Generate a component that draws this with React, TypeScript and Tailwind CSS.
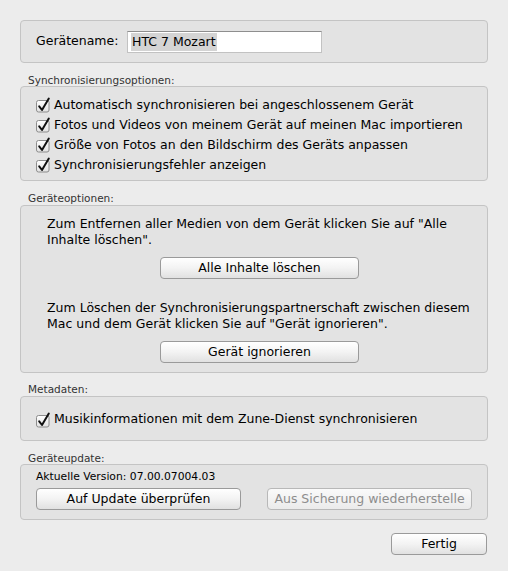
import type { ReactNode } from 'react';

const CheckBox = () => (
  <svg width="16" height="16" viewBox="0 0 16 16" className="shrink-0">
    <defs>
      <linearGradient id="cbFill" x1="0" y1="0" x2="0" y2="1">
        <stop offset="0" stopColor="#ffffff" />
        <stop offset="1" stopColor="#e2e2e2" />
      </linearGradient>
    </defs>
    <rect x="1.5" y="3.5" width="12.5" height="11.5" rx="2" fill="url(#cbFill)" stroke="#8c8c8c" />
    <path
      d="M4.2 9.4 L7 13 L13.8 1.6"
      fill="none"
      stroke="#111"
      strokeWidth="2"
      strokeLinecap="round"
      strokeLinejoin="round"
    />
  </svg>
);

const CheckRow = ({ children }: { children: ReactNode }) => (
  <div className="flex items-center gap-[3px] h-[20px] text-[12.5px] text-black">
    <CheckBox />
    <span>{children}</span>
  </div>
);

const Button = ({
  children,
  className = '',
  disabled = false,
}: {
  children: ReactNode;
  className?: string;
  disabled?: boolean;
}) => (
  <button
    type="button"
    className={`h-[22px] rounded-[4px] border text-[12.5px] leading-none flex items-center justify-center ${
      disabled
        ? 'border-[#b8b8b8] bg-linear-to-b from-[#fafafa] to-[#ebebeb] text-[#8d8d8d]'
        : 'border-[#9a9a9a] bg-linear-to-b from-[#ffffff] via-[#f3f3f3] to-[#e1e1e1] text-black'
    } ${className}`}
  >
    {children}
  </button>
);

const GroupLabel = ({ children, className = '' }: { children: ReactNode; className?: string }) => (
  <div className={`h-[12px] leading-[12px] pl-[8px] text-[10.5px] text-[#333] ${className}`}>{children}</div>
);

const Group = ({ children, className = '' }: { children: ReactNode; className?: string }) => (
  <div className={`rounded-[4px] border border-[#c4c4c4] bg-[#e3e3e3] ${className}`}>{children}</div>
);

export default function App() {
  return (
    <div className="min-h-screen bg-[#ececec] px-[20px] pt-[20px] font-['DejaVu_Sans',sans-serif] flex flex-col">
      {/* Gerätename */}
      <Group className="h-[43px] flex items-center pl-[15px]">
        <span className="w-[91px] text-[12.5px] text-black">Gerätename:</span>
        <div className="w-[195px] h-[22px] bg-white border border-[#c2c2c2] border-t-[#8e8e8e] flex items-center pl-[3px]">
          <span className="bg-[#d4d4d4] h-[18px] leading-[18px] px-[1px] text-[12.5px] text-black">HTC 7 Mozart</span>
        </div>
      </Group>

      {/* Synchronisierungsoptionen */}
      <GroupLabel className="mt-[11px]">Synchronisierungsoptionen:</GroupLabel>
      <Group className="pt-[8px] pb-[5px] pl-[14px]">
        <CheckRow>Automatisch synchronisieren bei angeschlossenem Gerät</CheckRow>
        <CheckRow>Fotos und Videos von meinem Gerät auf meinen Mac importieren</CheckRow>
        <CheckRow>Größe von Fotos an den Bildschirm des Geräts anpassen</CheckRow>
        <CheckRow>Synchronisierungsfehler anzeigen</CheckRow>
      </Group>

      {/* Geräteoptionen */}
      <GroupLabel className="mt-[11px] mb-[1px]">Geräteoptionen:</GroupLabel>
      <Group className="pt-[10px] pb-[9px] pl-[26px] pr-[15px] flex flex-col">
        <p className="text-[12.5px] leading-[16px] text-black">
          Zum Entfernen aller Medien von dem Gerät klicken Sie auf "Alle
          <br />
          Inhalte löschen".
        </p>
        <Button className="w-[199px] self-center mt-[9px]">Alle Inhalte löschen</Button>
        <p className="text-[12.5px] leading-[16px] text-black mt-[21px]">
          Zum Löschen der Synchronisierungspartnerschaft zwischen diesem
          <br />
          Mac und dem Gerät klicken Sie auf "Gerät ignorieren".
        </p>
        <Button className="w-[199px] self-center mt-[9px]">Gerät ignorieren</Button>
      </Group>

      {/* Metadaten */}
      <GroupLabel className="mt-[10px] mb-[1px]">Metadaten:</GroupLabel>
      <Group className="h-[45px] flex items-center pl-[14px] pt-[2px]">
        <CheckRow>Musikinformationen mit dem Zune-Dienst synchronisieren</CheckRow>
      </Group>

      {/* Geräteupdate */}
      <GroupLabel className="mt-[11px]">Geräteupdate:</GroupLabel>
      <Group className="pt-[6px] pb-[9px] pl-[15px] pr-[15px]">
        <div className="h-[12px] leading-[12px] text-[10.75px] text-black">Aktuelle Version: 07.00.07004.03</div>
        <div className="flex justify-between mt-[5px]">
          <Button className="w-[205px]">Auf Update überprüfen</Button>
          <Button className="w-[205px]" disabled>
            Aus Sicherung wiederherstelle
          </Button>
        </div>
      </Group>

      <div className="flex justify-end mt-[13px] pr-[1px]">
        <Button className="w-[96px]">Fertig</Button>
      </div>
    </div>
  );
}
